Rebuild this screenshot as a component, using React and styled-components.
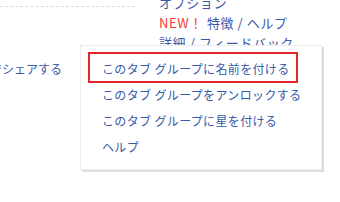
import React from "react";
import styled, { createGlobalStyle } from "styled-components";

const Global = createGlobalStyle`
  html, body { margin: 0; padding: 0; background: #ffffff; }
  body { font-family: "Noto Sans CJK JP", "Noto Sans", sans-serif; }
`;

const Page = styled.div`
  position: relative;
  width: 340px;
  height: 202px;
  overflow: hidden;
  display: flex;
  background: #fff;
`;

const LeftCol = styled.div`
  width: 150px;
  padding-top: 6px;
  display: flex;
  flex-direction: column;
`;

const Dashed = styled.div`
  width: 135px;
  border-top: 1px dashed #dcdcdc;
`;

const ShareText = styled.div`
  margin-top: 52px;
  margin-left: -10px;
  font-size: 12px;
  line-height: 20px;
  color: #3a5aa8;
  white-space: nowrap;
`;

const RightCol = styled.div`
  margin-left: 9px;
  margin-top: -7px;
  display: flex;
  flex-direction: column;
`;

const LinkLine = styled.div`
  font-size: 13px;
  line-height: 20px;
  letter-spacing: 0.6px;
  color: #3a5aa8;
  white-space: nowrap;
`;

const New = styled.span`
  color: #f43b3b;
  margin-right: 4px;
`;

const Menu = styled.ul`
  position: absolute;
  left: 80px;
  top: 45px;
  width: 240px;
  margin: 0;
  padding: 10px 0 9px;
  list-style: none;
  background: #fff;
  border: 1px solid #ececec;
  box-shadow: 2px 2px 0 #dedede;
`;

const Item = styled.li`
  position: relative;
  height: 26px;
  line-height: 26px;
  padding-left: 21px;
  font-size: 12px;
  letter-spacing: 0.35px;
  color: #3a5aa8;
  white-space: nowrap;
  &::after {
    content: "";
    display: ${(p) => (p.$highlighted ? "block" : "none")};
    position: absolute;
    top: -4px;
    bottom: -1px;
    left: 7px;
    right: 23px;
    border: 2px solid #e3262a;
  }
`;

export default function App() {
  return (
    <>
      <Global />
      <Page>
        <LeftCol>
          <Dashed />
          <ShareText>でシェアする</ShareText>
        </LeftCol>
        <RightCol>
          <LinkLine>オプション</LinkLine>
          <LinkLine>
            <New>NEW！</New>特徴 / ヘルプ
          </LinkLine>
          <LinkLine>詳細 / フィードバック</LinkLine>
        </RightCol>
        <Menu>
          <Item $highlighted>このタブ グループに名前を付ける</Item>
          <Item>このタブ グループをアンロックする</Item>
          <Item>このタブ グループに星を付ける</Item>
          <Item>ヘルプ</Item>
        </Menu>
      </Page>
    </>
  );
}
